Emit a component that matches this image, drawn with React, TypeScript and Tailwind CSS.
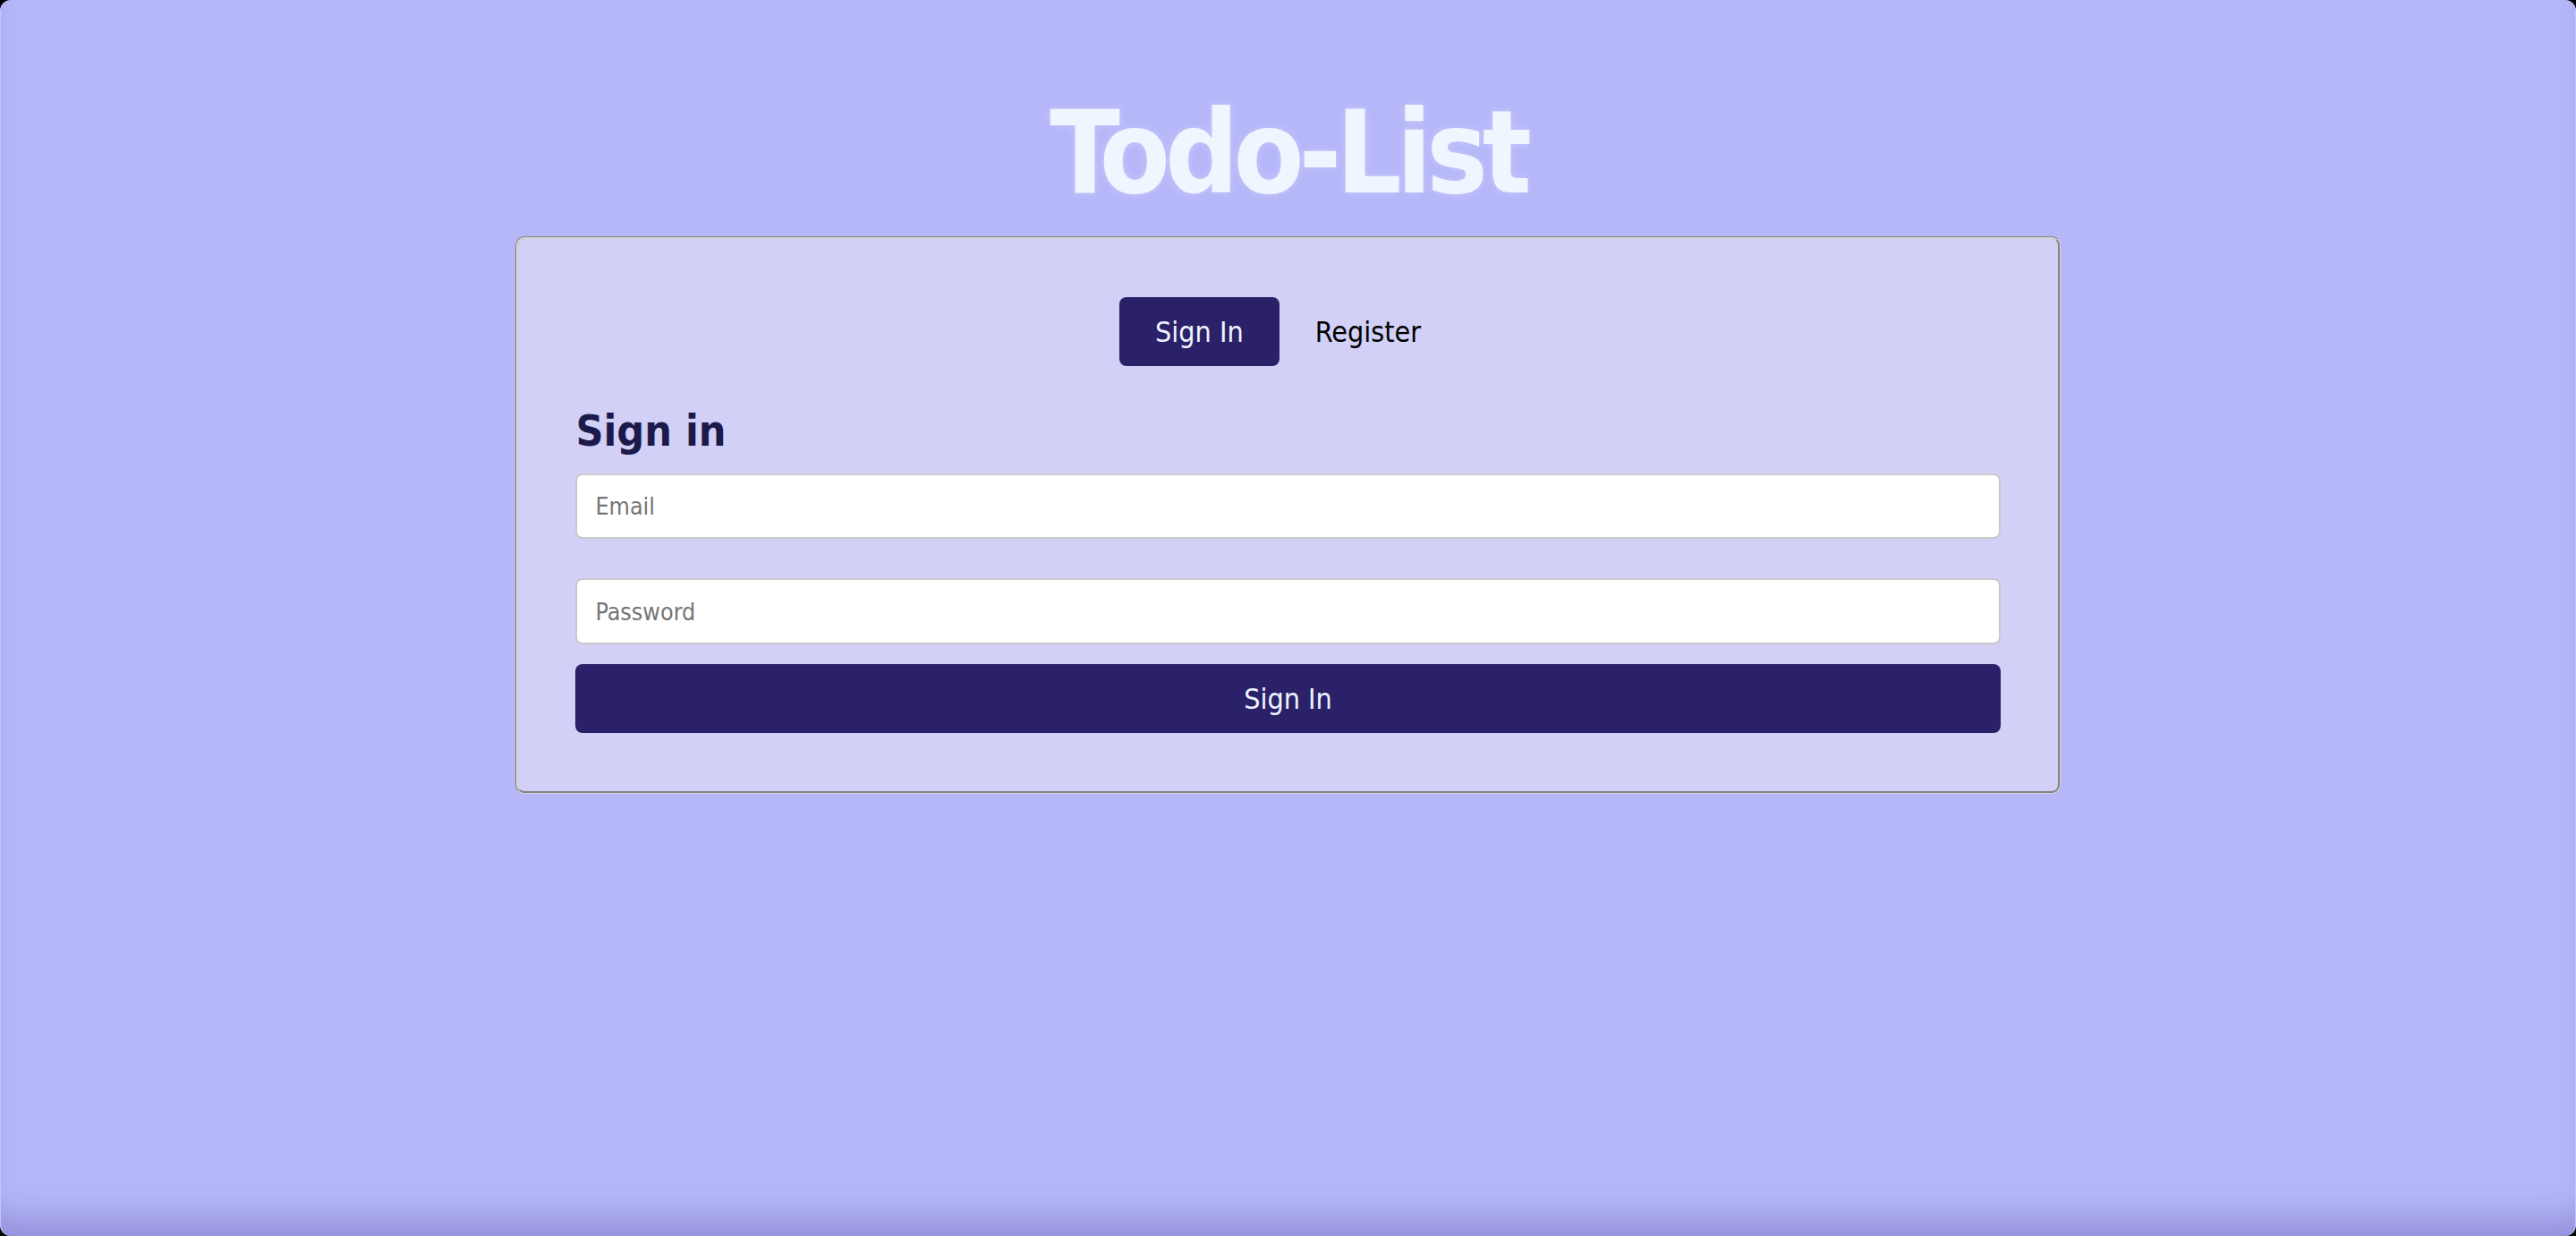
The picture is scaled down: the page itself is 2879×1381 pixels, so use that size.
import { useState } from 'react';

export default function App() {
  const [tab, setTab] = useState<'signin' | 'register'>('signin');

  return (
    <div className="h-screen w-full bg-black font-[family-name:DejaVu_Sans_Condensed,DejaVu_Sans,sans-serif]">
      <div className="flex h-full w-full flex-col items-center rounded-[12px] border-x border-[#c4c5fb] bg-[#b6b7f9] shadow-[inset_0_-40px_40px_-24px_rgba(70,60,150,0.35)]">
        <h1 className="mt-[107px] mb-[29px] text-[128px] font-bold leading-none tracking-[-6px] text-[#eff6ff] [text-shadow:0_0_8px_rgba(255,255,255,0.25)]">
          Todo-List
        </h1>

        <div className="w-[60%] rounded-[10px] border-[3px] border-[#d6d6d6] [border-style:groove] bg-[#d2d0f6] px-[64px] pt-[65px] pb-[65px]">
          <div className="flex justify-center">
            <button
              onClick={() => setTab('signin')}
              className={
                tab === 'signin'
                  ? 'h-[77px] rounded-[8px] bg-[#2b2169] px-[40px] text-[32px] text-[#eef4ff]'
                  : 'h-[77px] rounded-[8px] px-[40px] text-[32px] text-black'
              }
            >
              Sign In
            </button>
            <button
              onClick={() => setTab('register')}
              className={
                tab === 'register'
                  ? 'h-[77px] rounded-[8px] bg-[#2b2169] px-[40px] text-[32px] text-[#eef4ff]'
                  : 'h-[77px] rounded-[8px] px-[40px] text-[32px] text-black'
              }
            >
              Register
            </button>
          </div>

          <h2 className="mt-[48px] text-[48px] font-bold leading-none text-[#1c1a4b]">
            {tab === 'signin' ? 'Sign in' : 'Register'}
          </h2>

          <form className="mt-[24px] flex flex-col" onSubmit={(e) => e.preventDefault()}>
            <input
              type="email"
              placeholder="Email"
              className="h-[73px] w-full rounded-[8px] border-2 border-[#cacaca] bg-white px-[20px] text-[26.67px] outline-none placeholder:text-[#757575]"
            />
            <input
              type="password"
              placeholder="Password"
              className="mt-[44px] h-[74px] w-full rounded-[8px] border-2 border-[#cacaca] bg-white px-[20px] text-[26.67px] outline-none placeholder:text-[#757575]"
            />
            <button
              type="submit"
              className="mt-[22px] h-[77px] w-full rounded-[8px] bg-[#2b2169] text-[32px] text-[#eef4ff]"
            >
              {tab === 'signin' ? 'Sign In' : 'Register'}
            </button>
          </form>
        </div>
      </div>
    </div>
  );
}
